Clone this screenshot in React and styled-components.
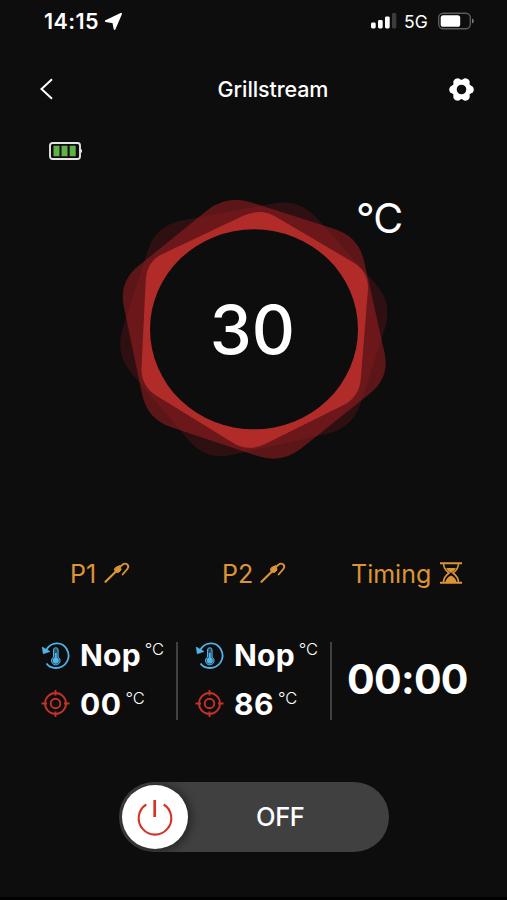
import React from "react";
import styled, { createGlobalStyle } from "styled-components";

const Global = createGlobalStyle`
  * { box-sizing: border-box; }
  body { margin: 0; background: #0d0d0d; }
`;

const Screen = styled.main`
  width: 507px;
  height: 900px;
  display: flex;
  flex-direction: column;
  overflow: hidden;
  background: #0d0d0d;
  color: #fff;
  font-family: Inter, "Liberation Sans", sans-serif;
  svg { display: block; flex: none; overflow: visible; }
`;

const StatusBar = styled.header`
  height: 42px;
  padding: 0 33px 0 44px;
  display: flex;
  align-items: center;
  justify-content: space-between;
`;

const Clock = styled.div`
  display: flex;
  align-items: center;
  gap: 6px;
  font-size: 21.5px;
  font-weight: 600;
  line-height: 42px;
  letter-spacing: 0.4px;
`;

const Signals = styled.div`
  display: flex;
  align-items: center;
  gap: 9px;
`;

const Network = styled.span`
  font-size: 17.5px;
  font-weight: 400;
  line-height: 42px;
  width: 24px;
  margin-top: 1px;
  margin-left: -1px;
  margin-right: 1px;
`;

const NavBar = styled.nav`
  height: 94px;
  padding: 0 33px 0 39px;
  display: grid;
  grid-template-columns: 26px 1fr 26px;
  align-items: center;
`;

const IconButton = styled.button`
  padding: 0;
  border: 0;
  background: none;
  color: #fff;
`;

const Title = styled.h1`
  margin: 0;
  padding-left: 33px;
  text-align: center;
  white-space: nowrap;
  font-size: 21.5px;
  font-weight: 500;
  letter-spacing: -0.1px;
`;

const DeviceRow = styled.div`
  height: 54px;
  padding: 6px 0 0 49px;
`;

const Gauge = styled.section`
  height: 350px;
  display: grid;
  grid-template-columns: 110px 290px 107px;
`;

const Dial = styled.div`
  grid-column: 2;
  display: grid;
  height: 280px;
  > * { grid-area: 1 / 1; }
`;

const Reading = styled.div`
  place-self: center;
  padding: 0 5px 0 0;
  font-size: 67px;
  font-weight: 500;
  line-height: 80px;
`;

const DialUnit = styled.div`
  grid-column: 3;
  margin: 3px 0 0 -44px;
  font-size: 41px;
  line-height: 50px;
  letter-spacing: -1px;
`;

const Tabs = styled.div`
  height: 66px;
  display: grid;
  grid-template-columns: 177px 154px 176px;
  color: #dc9438;
`;

const Tab = styled.div`
  display: flex;
  align-items: center;
  height: 68px;
  gap: ${(p) => p.$gap}px;
  padding-left: ${(p) => p.$inset}px;
  font-size: 25px;
  svg { margin-top: -2px; }
`;

const Probes = styled.section`
  margin-top: 36px;
  height: 78px;
  display: grid;
  grid-template-columns: 178px 154px 175px;
`;

const Probe = styled.div`
  display: flex;
  flex-direction: column;
  gap: 21px;
  height: 78px;
  padding-left: ${(p) => p.$inset}px;
  border-right: 2px solid #404040;
`;

const ProbeRow = styled.div`
  display: flex;
  height: 27px;
  align-items: center;
`;

const ProbeValue = styled.span`
  margin-left: 10px;
  font-size: 30px;
  font-weight: 700;
  line-height: 30px;
  letter-spacing: ${(p) => (p.$numeric ? 0.5 : 0.2)}px;
  margin-top: ${(p) => (p.$numeric ? 0 : -2)}px;
`;

const SmallUnit = styled.span`
  align-self: flex-start;
  margin-left: 4px;
  margin-top: ${(p) => (p.$numeric ? -3 : -4)}px;
  font-size: 16.5px;
  font-weight: 300;
  line-height: 22px;
`;

const Timer = styled.div`
  padding-left: 15px;
  font-size: 41px;
  font-weight: 700;
  line-height: 75px;
  letter-spacing: -0.7px;
`;

const Power = styled.div`
  display: flex;
  align-items: center;
  width: 270px;
  height: 70px;
  margin: 62px 0 0 119px;
  padding-left: 3px;
  border-radius: 35px;
  background: #404040;
  overflow: hidden;
`;

const Knob = styled.button`
  display: grid;
  place-items: center;
  width: 66px;
  height: 64px;
  padding: 0;
  border: 0;
  border-radius: 50%;
  background: #fff;
  box-shadow: 2px 1px 8px 2px rgba(0, 0, 0, 0.38);
`;

const PowerLabel = styled.span`
  margin: -1px 0 0 68px;
  font-size: 25.5px;
  font-weight: 500;
  letter-spacing: -0.4px;
`;

const BottomEdge = styled.div`
  height: 3px;
  margin-top: auto;
  background: #000;
`;

function rounded(points, radius) {
  const n = points.length;
  const toward = (a, b) => {
    const len = Math.hypot(b[0] - a[0], b[1] - a[1]);
    return [a[0] + ((b[0] - a[0]) * radius) / len, a[1] + ((b[1] - a[1]) * radius) / len];
  };
  return (
    points
      .map((p, i) => {
        const start = toward(p, points[(i + n - 1) % n]);
        const end = toward(p, points[(i + 1) % n]);
        return `${i ? "L" : "M"}${start} Q${p} ${end}`;
      })
      .join(" ") + "Z"
  );
}

const outer = [[568, 26], [849, 340], [728, 714], [288, 812], [14, 490], [138, 106]];
const middle = [[350, 14], [746, 140], [840, 562], [515, 822], [112, 688], [26, 276]];
const inner = [[452, 53], [778, 246], [748, 622], [415, 787], [92, 588], [110, 214]];

function Rosette() {
  return (
    <svg width="290" height="280" viewBox="0 0 870 840">
      <path d={rounded(outer, 78)} fill="rgb(190,32,40)" fillOpacity=".19" />
      <path d={rounded(middle, 76)} fill="rgb(160,32,34)" fillOpacity=".54" />
      <path d={rounded(inner, 56)} fill="#b42d2a" fillOpacity=".97" />
      <ellipse cx="432" cy="418" rx="312" ry="300" fill="#0d0d0d" />
    </svg>
  );
}

function ProbeIcon() {
  return (
    <svg width="26" height="22" viewBox="0 0 26 22" fill="none" stroke="currentColor" strokeLinecap="round">
      <path d="M1.500 19.800 13 8.500" strokeWidth="2.200" />
      <path d="M12 5.200 16.200 3.500 17 8l-2.500 2.500-3-.5-1-2.500Z" fill="currentColor" strokeWidth="1" />
      <path d="m17 4 1.500-1.300c3.500-2.700 7.500.8 4.900 4.200l-4.800 5.600" strokeWidth="1.800" />
    </svg>
  );
}

function Hourglass() {
  return (
    <svg width="22" height="22" viewBox="0 0 22 22" fill="none" stroke="currentColor">
      <path d="M0 1.200h22M0 20.800h22" strokeWidth="1.900" />
      <path d="M3.500 1.500c0 5 2 7 5.500 9.500-3.500 2.500-5.500 4.500-5.500 9.500M18.500 1.500c0 5-2 7-5.500 9.500 3.500 2.500 5.500 4.500 5.500 9.500" strokeWidth="1.600" />
      <path d="M6.200 6h9.600c-1 2-2.500 3.500-4.800 5-2.300-1.500-3.800-3-4.800-5Z" fill="currentColor" stroke="none" />
      <path d="M11 13.500c-2.500 1-5 3.500-5.500 6.500h11c-.5-3-3-5.500-5.500-6.500Z" fill="currentColor" stroke="none" />
    </svg>
  );
}

function CurrentTempIcon() {
  return (
    <svg width="29" height="28" viewBox="0 0 29 28" fill="none" stroke="#50b4e8">
      <path d="M5 8.500C9.500-.5 21-1 25.700 7c5 9-1 19-11 19-4 0-7-1.400-9.200-4.500" strokeWidth="1.800" />
      <path d="M1.200 5 2.300 11.800 9 9.500Z" fill="#50b4e8" strokeWidth=".6" />
      <path d="M12.500 15V8a2.300 2.300 0 0 1 4.600 0v7a4.300 4.300 0 1 1-4.600 0Z" fill="#26536b" strokeWidth="1" />
      <path d="M14.800 11v7" strokeWidth="1.800" />
      <circle cx="14.800" cy="18.500" r="2.900" fill="#50b4e8" stroke="none" />
    </svg>
  );
}

function TargetIcon() {
  return (
    <svg width="29" height="28" viewBox="0 0 29 28" fill="none" stroke="#c23229">
      <circle cx="14.500" cy="13.500" r="10.500" strokeWidth="1.900" />
      <circle cx="14.500" cy="13.500" r="4.800" strokeWidth="1.900" />
      <path d="M14.500 0v5.500M14.500 21.500V27M.5 13.500H6M23 13.500h5.500" strokeWidth="1.900" />
    </svg>
  );
}

function ProbePanel({ inset, target }) {
  return (
    <Probe $inset={inset}>
      <ProbeRow>
        <CurrentTempIcon />
        <ProbeValue>Nop</ProbeValue>
        <SmallUnit>°C</SmallUnit>
      </ProbeRow>
      <ProbeRow>
        <TargetIcon />
        <ProbeValue $numeric>{target}</ProbeValue>
        <SmallUnit $numeric>°C</SmallUnit>
      </ProbeRow>
    </Probe>
  );
}

const gearTeeth = [0, 60, 120, 180, 240, 300];

export default function App() {
  return (
    <Screen>
      <Global />
      <StatusBar>
        <Clock>
          14:15
          <svg width="17" height="17" viewBox="0 0 17 17">
            <path d="M16 .8 9.600 15.900 8.300 9.200.8 8Z" fill="#fff" stroke="#fff" strokeWidth="1.900" strokeLinejoin="round" />
          </svg>
        </Clock>
        <Signals>
          <svg width="26" height="16" viewBox="0 0 26 16" fill="#fff">
            <rect x="1" y="9.500" width="4.700" height="6" rx="1.400" />
            <rect x="8" y="7" width="4.700" height="8.500" rx="1.400" />
            <rect x="15" y="3.500" width="4.700" height="12" rx="1.400" />
            <rect x="22" y="0" width="4.300" height="15.500" rx="1.400" fill="#3c3c3c" />
          </svg>
          <Network>5G</Network>
          <svg width="36" height="17" viewBox="0 0 36 17">
            <rect x=".7" y=".2" width="31.600" height="15.600" rx="4.500" fill="none" stroke="#5c5c5c" strokeWidth="1.400" />
            <rect x="2.700" y="2.200" width="19.500" height="11.600" rx="2.600" fill="#fff" />
            <path d="M34 5.500v5c2.500-1.200 2.500-3.800 0-5Z" fill="#777" />
          </svg>
        </Signals>
      </StatusBar>
      <NavBar>
        <IconButton aria-label="Back">
          <svg width="15" height="22" viewBox="0 0 15 22" fill="none" stroke="#fff" strokeWidth="2">
            <path d="M13 1.200 2.500 11 13 20.800" />
          </svg>
        </IconButton>
        <Title>Grillstream</Title>
        <IconButton aria-label="Settings">
          <svg width="26" height="23" viewBox="-13.500 -11.500 26 23">
            <circle r="7.100" fill="none" stroke="#fff" strokeWidth="4.600" />
            {gearTeeth.map((a) => (
              <path key={a} d="M7 -5 9 -4.200 11.300 -2.800Q13.300 0 11.300 2.800L9 4.200 7 5Z" fill="#fff" transform={`rotate(${a})`} />
            ))}
          </svg>
        </IconButton>
      </NavBar>
      <DeviceRow>
        <svg width="33" height="18" viewBox="0 0 33 18">
          <rect x="1" y="1" width="30" height="16" rx="2.500" fill="none" stroke="#e4e4e4" strokeWidth="1.900" />
          <path d="M31.500 6.500 33 8v2l-1.500 1.500Z" fill="#e4e4e4" />
          <path d="M4.500 3.700h6v10.600h-6ZM12.500 3.700h6v10.600h-6ZM20.700 3.700h6v10.600h-6Z" fill="#61b149" />
        </svg>
      </DeviceRow>
      <Gauge>
        <Dial>
          <Rosette />
          <Reading>30</Reading>
        </Dial>
        <DialUnit>°C</DialUnit>
      </Gauge>
      <Tabs>
        <Tab $inset={70} $gap={8}>P1<ProbeIcon /></Tab>
        <Tab $inset={45} $gap={7}>P2<ProbeIcon /></Tab>
        <Tab $inset={20} $gap={9}>Timing<Hourglass /></Tab>
      </Tabs>
      <Probes>
        <ProbePanel inset={41} target="00" />
        <ProbePanel inset={17} target="86" />
        <Timer>00:00</Timer>
      </Probes>
      <Power>
        <Knob aria-label="Power">
          <svg width="36" height="37" viewBox="0 0 36 37" fill="none" stroke="#d33529">
            <path d="M9.300 5.500A16.300 16.300 0 1 0 26.700 5.500" strokeWidth="2.100" />
            <path d="M17.700 1v17" strokeWidth="2.700" />
          </svg>
        </Knob>
        <PowerLabel>OFF</PowerLabel>
      </Power>
      <BottomEdge />
    </Screen>
  );
}
